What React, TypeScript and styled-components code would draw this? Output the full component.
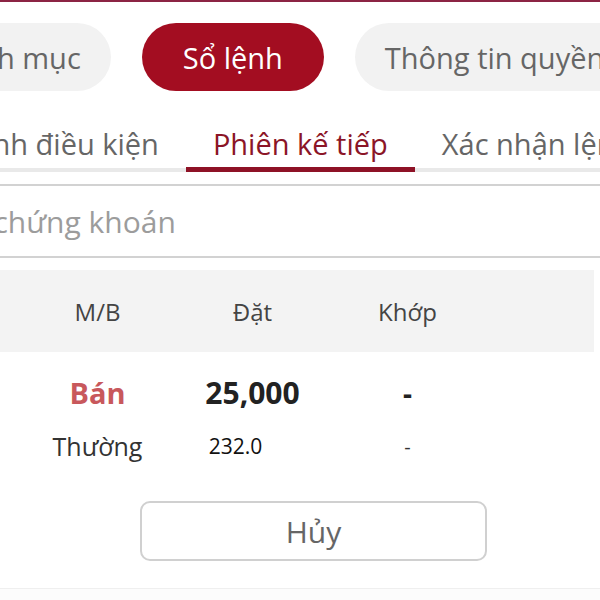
import React from "react";
import styled, { createGlobalStyle } from "styled-components";

const GlobalStyle = createGlobalStyle`
    html, body {
        margin: 0;
        padding: 0;
        background: #ffffff;
    }
    body {
        font-family: "Open Sans", "Liberation Sans", sans-serif;
    }
`;

const Page = styled.div`
    width: 600px;
    height: 600px;
    overflow: hidden;
    background: #ffffff;
    display: flex;
    flex-direction: column;
`;

const TopBar = styled.div`
    height: 2px;
    background: #8c2444;
    flex-shrink: 0;
`;

const PillRow = styled.div`
    display: flex;
    gap: 31px;
    margin: 21px 0 0 -88px;
    white-space: nowrap;
`;

const Pill = styled.div<{ $active?: boolean }>`
    height: 68px;
    padding: 0 ${p => (p.$active ? 41 : 30)}px;
    border-radius: 34px;
    display: flex;
    align-items: center;
    flex-shrink: 0;
    font-size: 29px;
    background: ${p => (p.$active ? "#a30d21" : "#f2f2f2")};
    color: ${p => (p.$active ? "#ffffff" : "#666666")};
`;

const TabRow = styled.div`
    display: flex;
    margin: 35px 0 0 -66px;
    white-space: nowrap;
    box-shadow: inset 0 -4px 0 #e9e9e9;
`;

const Tab = styled.div<{ $active?: boolean }>`
    flex-shrink: 0;
    padding: 0 27px 5px;
    line-height: 36px;
    font-size: 29px;
    color: ${p => (p.$active ? "#8b1527" : "#666666")};
    border-bottom: 5px solid ${p => (p.$active ? "#8e1226" : "transparent")};
`;

const SearchBox = styled.div`
    margin-top: 12px;
    height: 70px;
    border-top: 2px solid #d2d2d2;
    border-bottom: 2px solid #d2d2d2;
    display: flex;
    align-items: center;
    overflow: hidden;
`;

const SearchInput = styled.input`
    border: none;
    outline: none;
    background: transparent;
    margin-left: -58px;
    width: 500px;
    padding: 0;
    font-family: "Open Sans", "Liberation Sans", sans-serif;
    font-size: 30px;
    color: #333;

    &::placeholder {
        color: #9c9c9c;
    }
`;

const TableHead = styled.div`
    margin: 12px 6px 0 0;
    height: 82px;
    background: #f3f3f3;
    display: grid;
    grid-template-columns: 20px 155px 155px 155px 1fr;
    align-items: center;
`;

const HeadCell = styled.div`
    text-align: center;
    font-size: 24px;
    color: #444444;
`;

const Row = styled.div<{ $gap: number }>`
    display: grid;
    grid-template-columns: 20px 155px 155px 155px 1fr;
    align-items: center;
    margin-top: ${p => p.$gap}px;
`;

const Cell = styled.div<{ $bold?: boolean; $size: number; $color?: string; $shift?: number }>`
    text-align: center;
    font-size: ${p => p.$size}px;
    font-weight: ${p => (p.$bold ? 700 : 400)};
    color: ${p => p.$color || "#222222"};
    padding-right: ${p => p.$shift || 0}px;
`;

const ButtonWrap = styled.div`
    display: flex;
    padding-left: 140px;
    margin-top: 38px;
`;

const CancelButton = styled.button`
    width: 347px;
    height: 60px;
    border: 2px solid #d0d0d0;
    border-radius: 10px;
    background: #ffffff;
    font-family: "Open Sans", "Liberation Sans", sans-serif;
    font-size: 30px;
    color: #666666;
    padding: 0;
`;

const Footer = styled.div`
    margin-top: 27px;
    flex: 1;
    border-top: 1px solid #efefef;
    background: #fcfcfc;
`;

export default function App() {
    return (
        <>
            <GlobalStyle />
            <Page>
                <TopBar />
                <PillRow>
                    <Pill>Danh mục</Pill>
                    <Pill $active>Sổ lệnh</Pill>
                    <Pill>Thông tin quyền</Pill>
                </PillRow>
                <TabRow>
                    <Tab>Lệnh điều kiện</Tab>
                    <Tab $active>Phiên kế tiếp</Tab>
                    <Tab>Xác nhận lệnh</Tab>
                </TabRow>
                <SearchBox>
                    <SearchInput placeholder="Mã chứng khoán" />
                </SearchBox>
                <TableHead>
                    <div />
                    <HeadCell>M/B</HeadCell>
                    <HeadCell>Đặt</HeadCell>
                    <HeadCell>Khớp</HeadCell>
                </TableHead>
                <Row $gap={20}>
                    <div />
                    <Cell $bold $size={29} $color="#c8585c">Bán</Cell>
                    <Cell $bold $size={30}>25,000</Cell>
                    <Cell $bold $size={28}>-</Cell>
                </Row>
                <Row $gap={16}>
                    <div />
                    <Cell $size={25} $color="#333333">Thường</Cell>
                    <Cell $size={21} $color="#111111" $shift={34}>232.0</Cell>
                    <Cell $size={20} $color="#333333">-</Cell>
                </Row>
                <ButtonWrap>
                    <CancelButton>Hủy</CancelButton>
                </ButtonWrap>
                <Footer />
            </Page>
        </>
    );
}
